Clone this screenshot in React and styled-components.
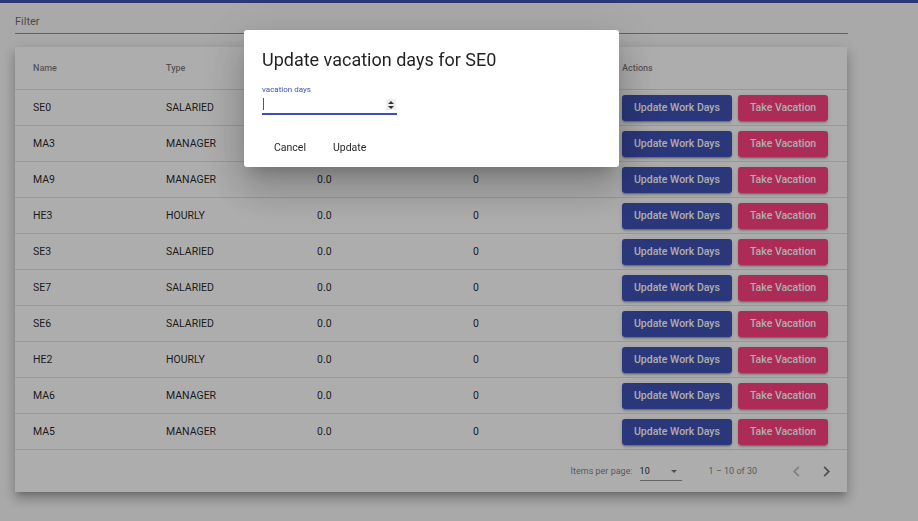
import React from "react";
import styled, { createGlobalStyle } from "styled-components";

const GlobalStyle = createGlobalStyle`
  html {
    overflow: hidden;
  }
  html, body {
    margin: 0;
    padding: 0;
    background: #fafafa;
    font-family: Roboto, "Noto Sans", sans-serif;
  }
`;

const TopBar = styled.div`
  height: 3px;
  background: #3f51b5;
`;

const Content = styled.div`
  width: 833px;
  padding: 0 15px 24px;
`;

const FilterField = styled.div`
  padding: 12px 0 4px;
  border-bottom: 1px solid rgba(0, 0, 0, 0.42);
  font-size: 11px;
  line-height: 14px;
  color: rgba(0, 0, 0, 0.6);
`;

const Card = styled.div`
  width: 832px;
  margin-top: 13px;
  background: #fff;
  box-shadow: 0 5px 5px -3px rgba(0, 0, 0, 0.2), 0 8px 10px 1px rgba(0, 0, 0, 0.14),
    0 3px 14px 2px rgba(0, 0, 0, 0.12);
`;

const Row = styled.div`
  display: grid;
  grid-template-columns: 133px 151px 156px 149px 1fr;
  align-items: center;
  box-sizing: border-box;
  height: ${(p) => (p.$header ? "43px" : "36px")};
  padding: 0 18px;
  border-bottom: 1px solid rgba(0, 0, 0, 0.12);
`;

const HeadCell = styled.div`
  font-size: 9px;
  font-weight: 500;
  color: rgba(0, 0, 0, 0.54);
`;

const Cell = styled.div`
  font-size: 10.5px;
  color: rgba(0, 0, 0, 0.87);
`;

const Actions = styled.div`
  display: flex;
  gap: 6px;
`;

const RaisedButton = styled.button`
  height: 26px;
  padding: 0 12px;
  border: none;
  border-radius: 3px;
  background: ${(p) => (p.$accent ? "#ff4081" : "#3f51b5")};
  color: #fff;
  font-family: Roboto, sans-serif;
  font-size: 10.5px;
  font-weight: 500;
  box-shadow: 0 3px 1px -2px rgba(0, 0, 0, 0.2), 0 2px 2px 0 rgba(0, 0, 0, 0.14),
    0 1px 5px 0 rgba(0, 0, 0, 0.12);
`;

const Paginator = styled.div`
  height: 42px;
  display: flex;
  justify-content: flex-end;
  align-items: center;
  padding: 0 6px;
  font-size: 9px;
  color: rgba(0, 0, 0, 0.54);
`;

const PageSizeLabel = styled.span`
  margin-right: 7px;
`;

const Select = styled.div`
  width: 42px;
  height: 18px;
  display: flex;
  align-items: center;
  justify-content: space-between;
  padding-right: 5px;
  box-sizing: border-box;
  border-bottom: 1px solid rgba(0, 0, 0, 0.42);
  margin-top: 1px;
  color: rgba(0, 0, 0, 0.87);
`;

const Arrow = styled.span`
  width: 0;
  height: 0;
  border-left: 3.75px solid transparent;
  border-right: 3.75px solid transparent;
  border-top: 3.75px solid rgba(0, 0, 0, 0.54);
`;

const RangeLabel = styled.span`
  margin: 0 24px 0 27px;
`;

const IconButton = styled.button`
  width: 30px;
  height: 30px;
  padding: 0;
  border: none;
  background: none;
  display: flex;
  align-items: center;
  justify-content: center;
  color: ${(p) => (p.disabled ? "rgba(0,0,0,0.26)" : "rgba(0,0,0,0.54)")};
`;

const Backdrop = styled.div`
  position: fixed;
  inset: 0;
  background: rgba(0, 0, 0, 0.32);
`;

const Dialog = styled.div`
  position: fixed;
  left: 244px;
  top: 30px;
  width: 375px;
  box-sizing: border-box;
  padding: 18px 18px 0;
  background: #fff;
  border-radius: 3px;
  box-shadow: 0 11px 15px -7px rgba(0, 0, 0, 0.2), 0 24px 38px 3px rgba(0, 0, 0, 0.14),
    0 9px 46px 8px rgba(0, 0, 0, 0.12);
`;

const DialogTitle = styled.h2`
  margin: 0 0 13px;
  font-size: 18px;
  line-height: 24px;
  font-weight: 400;
  color: rgba(0, 0, 0, 0.87);
`;

const Field = styled.div`
  width: 135px;
`;

const FieldLabel = styled.div`
  font-size: 8px;
  line-height: 10px;
  color: #3f51b5;
`;

const InputRow = styled.div`
  margin-top: 2px;
  height: 18px;
  box-sizing: border-box;
  padding: 1px 1px 0 0;
  display: flex;
  justify-content: space-between;
  align-items: flex-start;
  border-bottom: 2px solid #3f51b5;
`;

const Caret = styled.span`
  width: 1px;
  height: 12px;
  margin-left: 1px;
  background: #3f51b5;
`;

const Spinner = styled.span`
  width: 10px;
  height: 11px;
  margin-top: 1px;
  background: #efefef;
  display: flex;
  align-items: center;
  justify-content: center;
`;

const DialogActions = styled.div`
  margin-top: 13px;
  height: 39px;
  display: flex;
  align-items: center;
`;

const TextButton = styled.button`
  height: 27px;
  padding: 0 12px;
  border: none;
  background: none;
  font-family: Roboto, sans-serif;
  font-size: 10.5px;
  font-weight: 400;
  color: rgba(0, 0, 0, 0.87);
  & + & {
    margin-left: 3px;
  }
`;

const employees = [
  ["SE0", "SALARIED"],
  ["MA3", "MANAGER"],
  ["MA9", "MANAGER"],
  ["HE3", "HOURLY"],
  ["SE3", "SALARIED"],
  ["SE7", "SALARIED"],
  ["SE6", "SALARIED"],
  ["HE2", "HOURLY"],
  ["MA6", "MANAGER"],
  ["MA5", "MANAGER"],
];

const Chevron = ({ dir }) => (
  <svg width="21" height="21" viewBox="0 0 24 24" fill="currentColor">
    {dir === "left" ? (
      <path d="M15.41 7.41L14 6l-6 6 6 6 1.41-1.41L10.83 12z" />
    ) : (
      <path d="M10 6L8.59 7.41 13.17 12l-4.58 4.59L10 18l6-6z" />
    )}
  </svg>
);

export default function App() {
  return (
    <>
      <GlobalStyle />
      <TopBar />
      <Content>
        <FilterField>Filter</FilterField>
        <Card>
          <Row $header>
            <HeadCell>Name</HeadCell>
            <HeadCell>Type</HeadCell>
            {/* these two headers sit under the open dialog */}
            <HeadCell />
            <HeadCell />
            <HeadCell>Actions</HeadCell>
          </Row>
          {employees.map(([name, type]) => (
            <Row key={name}>
              <Cell>{name}</Cell>
              <Cell>{type}</Cell>
              <Cell>0.0</Cell>
              <Cell>0</Cell>
              <Actions>
                <RaisedButton>Update Work Days</RaisedButton>
                <RaisedButton $accent>Take Vacation</RaisedButton>
              </Actions>
            </Row>
          ))}
          <Paginator>
            <PageSizeLabel>Items per page:</PageSizeLabel>
            <Select>
              <span>10</span>
              <Arrow />
            </Select>
            <RangeLabel>1 – 10 of 30</RangeLabel>
            <IconButton disabled>
              <Chevron dir="left" />
            </IconButton>
            <IconButton>
              <Chevron dir="right" />
            </IconButton>
          </Paginator>
        </Card>
      </Content>
      <Backdrop />
      <Dialog>
        <DialogTitle>Update vacation days for SE0</DialogTitle>
        <Field>
          <FieldLabel>vacation days</FieldLabel>
          <InputRow>
            <Caret />
            <Spinner>
              <svg width="6" height="8" viewBox="0 0 6 8" fill="#333">
                <path d="M3 0L6 3H0z M3 8L0 5h6z" />
              </svg>
            </Spinner>
          </InputRow>
        </Field>
        <DialogActions>
          <TextButton>Cancel</TextButton>
          <TextButton>Update</TextButton>
        </DialogActions>
      </Dialog>
    </>
  );
}
